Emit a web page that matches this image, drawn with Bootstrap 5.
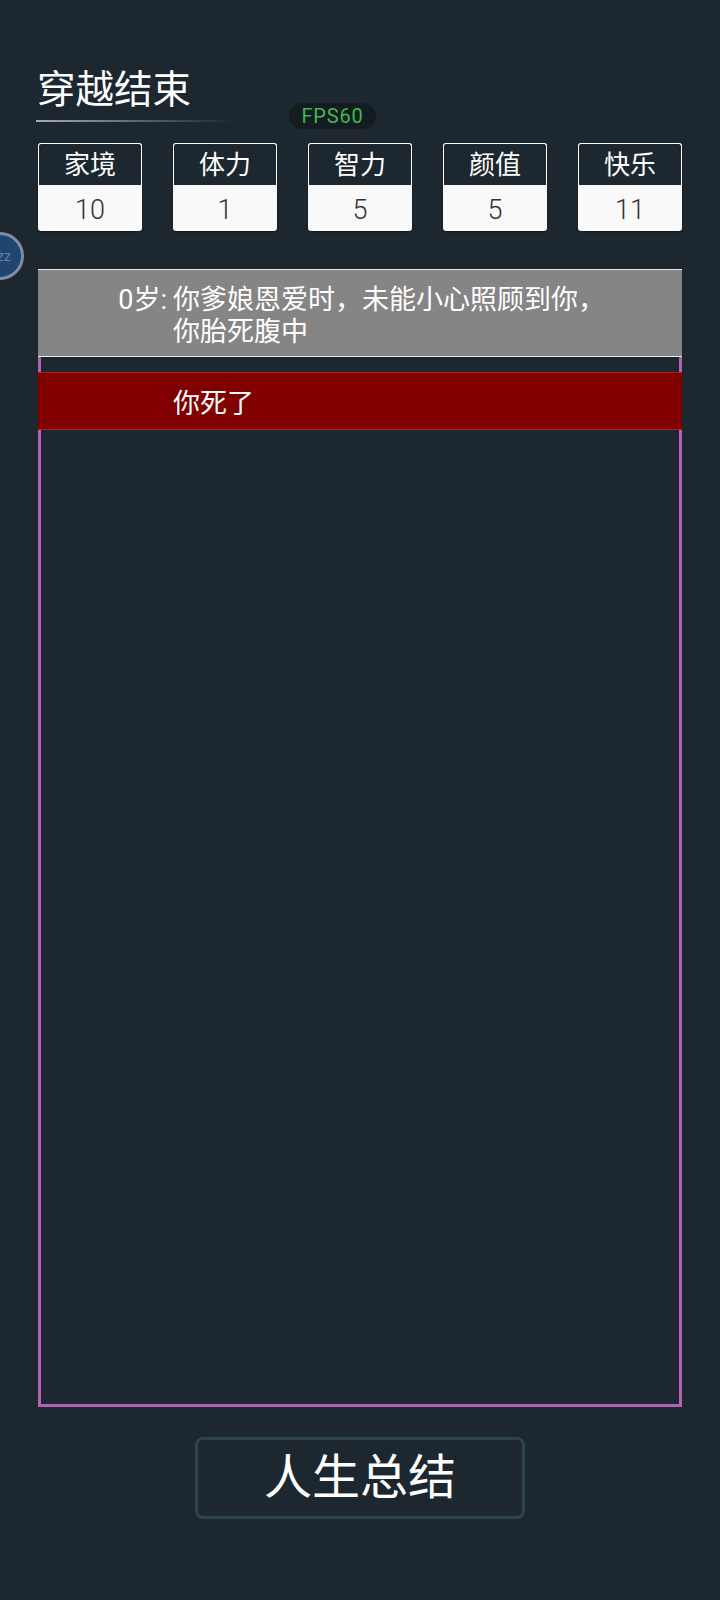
<!DOCTYPE html>
<html lang="zh">
<head>
<meta charset="utf-8">
<title>穿越结束</title>
<link href="https://cdn.jsdelivr.net/npm/bootstrap@5.3.0/dist/css/bootstrap.min.css" rel="stylesheet">
<style>
html,body{height:100%}
body{background:#1c2730;color:#fff;font-family:Roboto,"Noto Sans CJK SC",sans-serif;font-weight:300;overflow:hidden}
.page{width:720px;height:1600px;padding:0 38px;position:relative}
.page-title{margin:0 0 0 -1px;padding-top:66px;height:120px;font-size:38.5px;line-height:47px;font-weight:400;color:#fff}
.title-rule{height:2px;width:196px;margin-left:-2px;background:linear-gradient(90deg,#a7abaf,#1c2730)}
.fps-pill{position:absolute;left:289px;top:103px;width:87px;height:26px;border-radius:13px;background:#141c22;color:#3fb950;font-size:20px;line-height:26px;text-align:center;font-weight:400;letter-spacing:.8px}
.sleep-ball{position:absolute;left:-24px;top:232px;width:48px;height:48px;border-radius:50%;background:#1f4570;border:3px solid #7c8fa3;color:#64809c;font-size:14px;line-height:42px;text-align:right;padding-right:10px;font-weight:400}
.stat-row{margin-top:21px;height:89px}
.stat-tile{width:104px;height:88px;border:0;border-radius:3px;overflow:hidden;background:#f9f9f9;box-shadow:0 1px 2px rgba(0,0,0,.4)}
.stat-name{height:42px;background:#1c2730;border:1px solid #fff;border-bottom:0;border-radius:3px 3px 0 0;color:#fff;font-size:26px;line-height:43px;text-align:center;font-weight:400}
.stat-value{height:46px;color:#333;font-size:27px;line-height:50px;text-align:center}
.life-box{margin-top:37px;height:1138px;border:3px solid #b062b4;background:transparent}
.life-item{margin:0 -3px;display:flex;font-size:27px;line-height:32px;color:#fff;font-weight:400}
.life-grey{margin-top:-3px;height:88px;background:#858585;border-top:1px solid #e8e8e8;border-bottom:1px solid #e8e8e8;padding-top:14px}
.life-red{margin-top:15px;height:58px;background:#800000;border-top:1px solid #c01818;border-bottom:1px solid #c01818;padding-top:15px}
.life-age{width:135px;text-align:right;flex:none;padding-right:6px}
.life-text{width:440px}
.summary-btn{display:block;width:330px;height:82px;margin:30px auto 0;padding:0;background:transparent;border:3px solid #2c4549;border-radius:8px;color:#fff;font-size:48px;line-height:76px;font-weight:400}
.summary-btn:hover,.summary-btn:active{color:#fff;background:transparent;border-color:#2c4549}
</style>
</head>
<body>
<div class="page">
  <h1 class="page-title">穿越结束</h1>
  <div class="title-rule"></div>
  <div class="fps-pill">FPS60</div>
  <div class="sleep-ball">zz</div>
  <div class="stat-row d-flex justify-content-between">
    <div class="card stat-tile"><div class="stat-name">家境</div><div class="stat-value">10</div></div>
    <div class="card stat-tile"><div class="stat-name">体力</div><div class="stat-value">1</div></div>
    <div class="card stat-tile"><div class="stat-name">智力</div><div class="stat-value">5</div></div>
    <div class="card stat-tile"><div class="stat-name">颜值</div><div class="stat-value">5</div></div>
    <div class="card stat-tile"><div class="stat-name">快乐</div><div class="stat-value">11</div></div>
  </div>
  <div class="life-box">
    <div class="life-item life-grey"><div class="life-age">0岁:</div><div class="life-text">你爹娘恩爱时，未能小心照顾到你，你胎死腹中</div></div>
    <div class="life-item life-red"><div class="life-age"></div><div class="life-text">你死了</div></div>
  </div>
  <button type="button" class="btn summary-btn">人生总结</button>
</div>
<script src="https://cdn.jsdelivr.net/npm/bootstrap@5.3.0/dist/js/bootstrap.bundle.min.js"></script>
</body>
</html>
